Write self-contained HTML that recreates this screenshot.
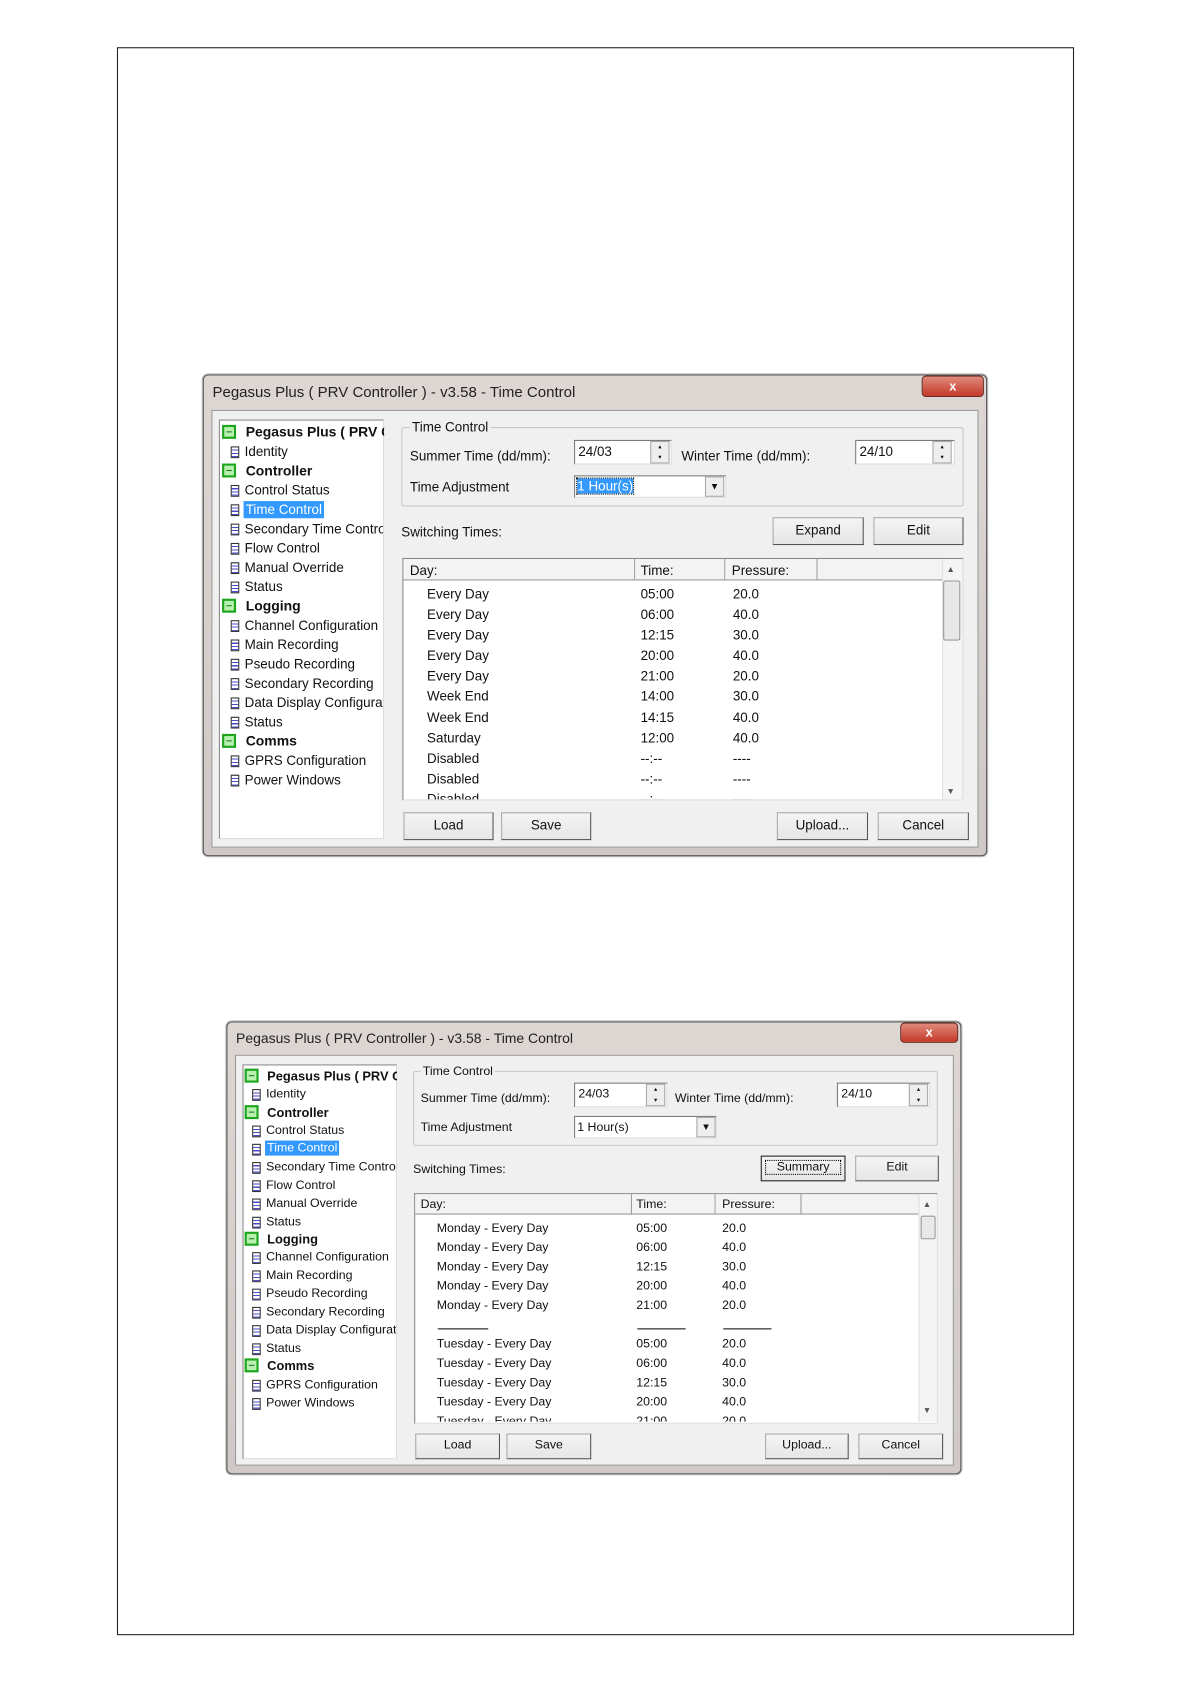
<!DOCTYPE html>
<html><head><meta charset="utf-8"><style>
html,body{margin:0;padding:0;background:#fff;width:1191px;height:1684px;overflow:hidden}
#c{position:absolute;left:0;top:0;width:1110px;height:1570px;transform:scale(1.07297);transform-origin:0 0;font-family:"Liberation Sans",sans-serif;color:#111}
#c div{position:absolute;box-sizing:border-box}
.t{white-space:nowrap;font-size:12.5px;line-height:14px}
.win{border:1px solid #555;border-radius:5px;background:linear-gradient(#ddd6d3,#cfc8c6);box-shadow:0 0 0 1px #bbb}
.body{background:#f0f0f0;border:1px solid #999}
.tree{background:#fff;border:1px solid #8a8a8a;border-right-color:#ddd;border-bottom-color:#ddd;overflow:hidden}
.gb{border:1px solid #c8c8c8;border-radius:2px}
.inp{background:#fff;border:1px solid #7a7a7a;border-right-color:#ddd;border-bottom-color:#ddd}
.btn{background:linear-gradient(#f4f4f4,#e6e6e6);border:1px solid #aaa;border-right-color:#555;border-bottom-color:#555;text-align:center}
.list{background:#fff;border:1px solid #888;border-right-color:#ddd;border-bottom-color:#ddd;overflow:hidden}
.hdr{background:#f3f3f3;border-bottom:1px solid #999;border-right:1px solid #999}
.close{background:linear-gradient(#e08a7a,#c4392a);border:1px solid #6d2b22;border-radius:4px;color:#fff;font-weight:bold;text-align:center;font-size:12px}
.gi{width:13px;height:13px;border:2px solid #1ea51e;background:#b8f0b0}
.gi:after{content:"";position:absolute;left:2px;top:4px;width:5px;height:1px;background:#1c7c1c}
.di{width:8px;height:11px;border:1px solid #333;background:repeating-linear-gradient(#fff 0 2px,#4a4acc 2px 3px)}
.sel{background:#3399ff;color:#fff}
.b{font-weight:bold}
.spin{width:18px;border:1px solid #aaa;background:#eee;font-size:6px;text-align:center}
.sb{background:#f4f4f4;border-left:1px solid #e0e0e0}
.hr{height:1px;background:#111}
.w1{max-width:129px;overflow:hidden}
.w2{max-width:121px;overflow:hidden}
</style></head><body><div id="c">
<div style="left:109px;top:44px;width:892px;height:1480px;border:1px solid #222"></div>

<!-- WINDOW 1 -->
<div class="win" style="left:189px;top:349px;width:731px;height:449px"></div>
<div class="t" style="left:198px;top:357px;font-size:14px;line-height:17px;color:#222">Pegasus Plus ( PRV Controller ) - v3.58 - Time Control</div>
<div class="close" style="left:859px;top:350px;width:58px;height:20px;line-height:18px">x</div>
<div class="body" style="left:197px;top:382px;width:715px;height:408px"></div>
<div class="tree" style="left:204px;top:391px;width:154px;height:391px"></div>
<div class="gi" style="left:207px;top:396px"></div><div class="t b w1" style="left:229px;top:396px;font-size:13px">Pegasus Plus ( PRV C</div>
<div class="di" style="left:215px;top:416px"></div><div class="t" style="left:228px;top:414px">Identity</div>
<div class="gi" style="left:207px;top:432px"></div><div class="t b" style="left:229px;top:432px;font-size:13px">Controller</div>
<div class="di" style="left:215px;top:452px"></div><div class="t" style="left:228px;top:450px">Control Status</div>
<div class="di" style="left:215px;top:470px"></div><div class="t sel" style="left:227px;top:467px;padding:1px 2px">Time Control</div>
<div class="di" style="left:215px;top:488px"></div><div class="t w1" style="left:228px;top:486px">Secondary Time Control</div>
<div class="di" style="left:215px;top:506px"></div><div class="t" style="left:228px;top:504px">Flow Control</div>
<div class="di" style="left:215px;top:524px"></div><div class="t" style="left:228px;top:522px">Manual Override</div>
<div class="di" style="left:215px;top:542px"></div><div class="t" style="left:228px;top:540px">Status</div>
<div class="gi" style="left:207px;top:558px"></div><div class="t b" style="left:229px;top:558px;font-size:13px">Logging</div>
<div class="di" style="left:215px;top:578px"></div><div class="t w1" style="left:228px;top:576px">Channel Configuration</div>
<div class="di" style="left:215px;top:596px"></div><div class="t" style="left:228px;top:594px">Main Recording</div>
<div class="di" style="left:215px;top:614px"></div><div class="t" style="left:228px;top:612px">Pseudo Recording</div>
<div class="di" style="left:215px;top:632px"></div><div class="t" style="left:228px;top:630px">Secondary Recording</div>
<div class="di" style="left:215px;top:650px"></div><div class="t w1" style="left:228px;top:648px">Data Display Configuration</div>
<div class="di" style="left:215px;top:668px"></div><div class="t" style="left:228px;top:666px">Status</div>
<div class="gi" style="left:207px;top:684px"></div><div class="t b" style="left:229px;top:684px;font-size:13px">Comms</div>
<div class="di" style="left:215px;top:704px"></div><div class="t" style="left:228px;top:702px">GPRS Configuration</div>
<div class="di" style="left:215px;top:722px"></div><div class="t" style="left:228px;top:720px">Power Windows</div>

<div class="gb" style="left:374px;top:398px;width:524px;height:74px"></div>
<div class="t" style="left:382px;top:391px;background:#f0f0f0;padding:0 2px">Time Control</div>
<div class="t" style="left:382px;top:418px">Summer Time (dd/mm):</div>
<div class="inp" style="left:535px;top:410px;width:91px;height:23px"></div>
<div class="t" style="left:539px;top:414px">24/03</div>
<div class="spin" style="left:606px;top:411px;height:21px;line-height:10px">▴<br>▾</div>
<div class="t" style="left:635px;top:418px">Winter Time (dd/mm):</div>
<div class="inp" style="left:797px;top:410px;width:93px;height:23px"></div>
<div class="t" style="left:801px;top:414px">24/10</div>
<div class="spin" style="left:869px;top:411px;height:21px;line-height:10px">▴<br>▾</div>
<div class="t" style="left:382px;top:447px">Time Adjustment</div>
<div class="inp" style="left:535px;top:443px;width:142px;height:21px"></div>
<div class="t sel" style="left:538px;top:446px;outline:1px dotted #000">1 Hour(s)</div>
<div class="spin" style="left:657px;top:444px;height:19px;line-height:17px;font-size:9px">▼</div>
<div class="t" style="left:374px;top:489px">Switching Times:</div>
<div class="btn t" style="left:720px;top:482px;width:85px;height:26px;line-height:23px">Expand</div>
<div class="btn t" style="left:814px;top:482px;width:84px;height:26px;line-height:23px">Edit</div>

<div class="list" style="left:375px;top:520px;width:523px;height:226px"></div>
<div class="hdr" style="left:376px;top:521px;width:216px;height:20px"></div>
<div class="hdr" style="left:592px;top:521px;width:84px;height:20px"></div>
<div class="hdr" style="left:676px;top:521px;width:86px;height:20px"></div>
<div class="hdr" style="left:762px;top:521px;width:116px;height:20px;border-right:none"></div>
<div class="t" style="left:382px;top:525px">Day:</div><div class="t" style="left:597px;top:525px">Time:</div><div class="t" style="left:682px;top:525px">Pressure:</div>
<div class="sb" style="left:878px;top:521px;width:19px;height:224px"></div>
<div class="t" style="left:882px;top:524px;font-size:8px;color:#555">▲</div>
<div style="left:879px;top:541px;width:16px;height:56px;background:#e8e8e8;border:1px solid #999;border-radius:2px"></div>
<div class="t" style="left:882px;top:731px;font-size:8px;color:#555">▼</div>
<div style="left:376px;top:542px;width:500px;height:203px;overflow:hidden">
<div class="t" style="left:22px;top:3px;line-height:19.1px">Every Day<br>Every Day<br>Every Day<br>Every Day<br>Every Day<br>Week End<br>Week End<br>Saturday<br>Disabled<br>Disabled<br>Disabled</div>
<div class="t" style="left:221px;top:3px;line-height:19.1px">05:00<br>06:00<br>12:15<br>20:00<br>21:00<br>14:00<br>14:15<br>12:00<br>--:--<br>--:--<br>--:--</div>
<div class="t" style="left:307px;top:3px;line-height:19.1px">20.0<br>40.0<br>30.0<br>40.0<br>20.0<br>30.0<br>40.0<br>40.0<br>----<br>----<br>----</div>
</div>
<div class="btn t" style="left:376px;top:757px;width:84px;height:26px;line-height:23px">Load</div>
<div class="btn t" style="left:467px;top:757px;width:84px;height:26px;line-height:23px">Save</div>
<div class="btn t" style="left:724px;top:757px;width:85px;height:26px;line-height:23px">Upload...</div>
<div class="btn t" style="left:818px;top:757px;width:85px;height:26px;line-height:23px">Cancel</div>

<!-- WINDOW 2 -->
<div class="win" style="left:211px;top:952px;width:685px;height:422px"></div>
<div class="t" style="left:220px;top:960px;font-size:13px;line-height:16px;color:#222">Pegasus Plus ( PRV Controller ) - v3.58 - Time Control</div>
<div class="close" style="left:839px;top:953px;width:54px;height:19px;line-height:17px">x</div>
<div class="body" style="left:219px;top:983px;width:670px;height:383px"></div>
<div class="tree" style="left:226px;top:992px;width:144px;height:368px"></div>
<div class="gi" style="left:228px;top:996px"></div><div class="t b w2" style="left:249px;top:996px;font-size:12px">Pegasus Plus ( PRV C</div>
<div class="di" style="left:235px;top:1015px"></div><div class="t" style="left:248px;top:1013px;font-size:11.5px">Identity</div>
<div class="gi" style="left:228px;top:1030px"></div><div class="t b" style="left:249px;top:1030px;font-size:12px">Controller</div>
<div class="di" style="left:235px;top:1049px"></div><div class="t" style="left:248px;top:1047px;font-size:11.5px">Control Status</div>
<div class="di" style="left:235px;top:1066px"></div><div class="t sel" style="left:247px;top:1063px;font-size:11.5px;padding:0 2px">Time Control</div>
<div class="di" style="left:235px;top:1083px"></div><div class="t w2" style="left:248px;top:1081px;font-size:11.5px">Secondary Time Control</div>
<div class="di" style="left:235px;top:1100px"></div><div class="t" style="left:248px;top:1098px;font-size:11.5px">Flow Control</div>
<div class="di" style="left:235px;top:1117px"></div><div class="t" style="left:248px;top:1115px;font-size:11.5px">Manual Override</div>
<div class="di" style="left:235px;top:1134px"></div><div class="t" style="left:248px;top:1132px;font-size:11.5px">Status</div>
<div class="gi" style="left:228px;top:1148px"></div><div class="t b" style="left:249px;top:1148px;font-size:12px">Logging</div>
<div class="di" style="left:235px;top:1167px"></div><div class="t w2" style="left:248px;top:1165px;font-size:11.5px">Channel Configuration</div>
<div class="di" style="left:235px;top:1184px"></div><div class="t" style="left:248px;top:1182px;font-size:11.5px">Main Recording</div>
<div class="di" style="left:235px;top:1201px"></div><div class="t" style="left:248px;top:1199px;font-size:11.5px">Pseudo Recording</div>
<div class="di" style="left:235px;top:1218px"></div><div class="t w2" style="left:248px;top:1216px;font-size:11.5px">Secondary Recording</div>
<div class="di" style="left:235px;top:1235px"></div><div class="t w2" style="left:248px;top:1233px;font-size:11.5px">Data Display Configuration</div>
<div class="di" style="left:235px;top:1252px"></div><div class="t" style="left:248px;top:1250px;font-size:11.5px">Status</div>
<div class="gi" style="left:228px;top:1266px"></div><div class="t b" style="left:249px;top:1266px;font-size:12px">Comms</div>
<div class="di" style="left:235px;top:1286px"></div><div class="t" style="left:248px;top:1284px;font-size:11.5px">GPRS Configuration</div>
<div class="di" style="left:235px;top:1303px"></div><div class="t" style="left:248px;top:1301px;font-size:11.5px">Power Windows</div>

<div class="gb" style="left:385px;top:998px;width:489px;height:70px"></div>
<div class="t" style="left:392px;top:992px;background:#f0f0f0;padding:0 2px;font-size:11.5px">Time Control</div>
<div class="t" style="left:392px;top:1017px;font-size:11.5px">Summer Time (dd/mm):</div>
<div class="inp" style="left:535px;top:1009px;width:87px;height:23px"></div>
<div class="t" style="left:539px;top:1013px;font-size:11.5px">24/03</div>
<div class="spin" style="left:602px;top:1010px;height:21px;line-height:10px">▴<br>▾</div>
<div class="t" style="left:629px;top:1017px;font-size:11.5px">Winter Time (dd/mm):</div>
<div class="inp" style="left:780px;top:1009px;width:87px;height:23px"></div>
<div class="t" style="left:784px;top:1013px;font-size:11.5px">24/10</div>
<div class="spin" style="left:847px;top:1010px;height:21px;line-height:10px">▴<br>▾</div>
<div class="t" style="left:392px;top:1044px;font-size:11.5px">Time Adjustment</div>
<div class="inp" style="left:535px;top:1040px;width:133px;height:21px"></div>
<div class="t" style="left:538px;top:1044px;font-size:11.5px">1 Hour(s)</div>
<div class="spin" style="left:649px;top:1041px;height:19px;line-height:17px;font-size:9px">▼</div>
<div class="t" style="left:385px;top:1083px;font-size:11.5px">Switching Times:</div>
<div class="btn t" style="left:709px;top:1077px;width:79px;height:24px;line-height:21px;font-size:11.5px;border:1px solid #222"><span style="border:1px dotted #000;padding:0 10px">Summary</span></div>
<div class="btn t" style="left:797px;top:1077px;width:78px;height:24px;line-height:21px;font-size:11.5px">Edit</div>

<div class="list" style="left:386px;top:1112px;width:488px;height:215px"></div>
<div class="hdr" style="left:387px;top:1113px;width:202px;height:19px"></div>
<div class="hdr" style="left:589px;top:1113px;width:78px;height:19px"></div>
<div class="hdr" style="left:667px;top:1113px;width:80px;height:19px"></div>
<div class="hdr" style="left:747px;top:1113px;width:109px;height:19px;border-right:none"></div>
<div class="t" style="left:392px;top:1116px;font-size:11.5px">Day:</div><div class="t" style="left:593px;top:1116px;font-size:11.5px">Time:</div><div class="t" style="left:673px;top:1116px;font-size:11.5px">Pressure:</div>
<div class="sb" style="left:856px;top:1113px;width:17px;height:212px"></div>
<div class="t" style="left:860px;top:1116px;font-size:8px;color:#555">▲</div>
<div style="left:858px;top:1133px;width:14px;height:22px;background:#e8e8e8;border:1px solid #999;border-radius:2px"></div>
<div class="t" style="left:860px;top:1308px;font-size:8px;color:#555">▼</div>
<div style="left:387px;top:1133px;width:469px;height:192px;overflow:hidden">
<div class="t" style="left:20px;top:3px;line-height:18px;font-size:11.5px">Monday - Every Day<br>Monday - Every Day<br>Monday - Every Day<br>Monday - Every Day<br>Monday - Every Day<br>&nbsp;<br>Tuesday - Every Day<br>Tuesday - Every Day<br>Tuesday - Every Day<br>Tuesday - Every Day<br>Tuesday - Every Day</div>
<div class="t" style="left:206px;top:3px;line-height:18px;font-size:11.5px">05:00<br>06:00<br>12:15<br>20:00<br>21:00<br>&nbsp;<br>05:00<br>06:00<br>12:15<br>20:00<br>21:00</div>
<div class="t" style="left:286px;top:3px;line-height:18px;font-size:11.5px">20.0<br>40.0<br>30.0<br>40.0<br>20.0<br>&nbsp;<br>20.0<br>40.0<br>30.0<br>40.0<br>20.0</div>
<div class="hr" style="left:21px;top:105px;width:47px"></div>
<div class="hr" style="left:207px;top:105px;width:45px"></div>
<div class="hr" style="left:287px;top:105px;width:45px"></div>
</div>
<div class="btn t" style="left:387px;top:1336px;width:79px;height:24px;line-height:21px;font-size:11.5px">Load</div>
<div class="btn t" style="left:472px;top:1336px;width:79px;height:24px;line-height:21px;font-size:11.5px">Save</div>
<div class="btn t" style="left:713px;top:1336px;width:78px;height:24px;line-height:21px;font-size:11.5px">Upload...</div>
<div class="btn t" style="left:800px;top:1336px;width:79px;height:24px;line-height:21px;font-size:11.5px">Cancel</div>
</div></body></html>
